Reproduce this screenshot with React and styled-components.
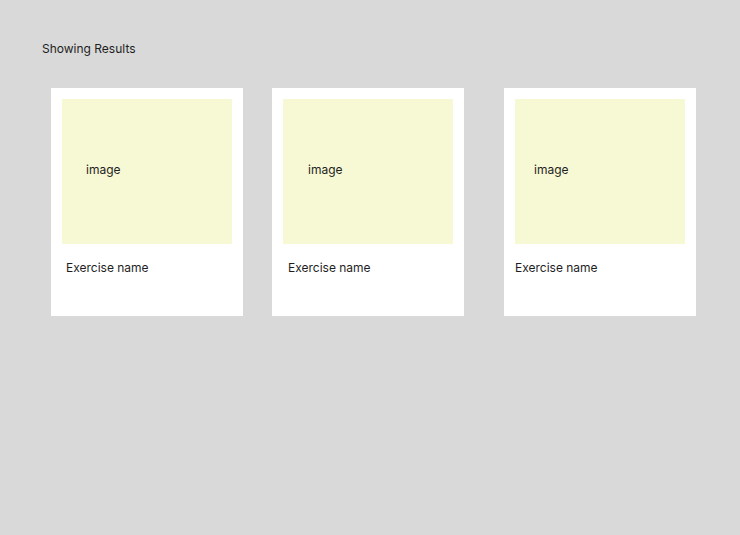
import React from "react";
import styled, { createGlobalStyle } from "styled-components";

const Global = createGlobalStyle`
  html, body {
    margin: 0;
    padding: 0;
    background: #d9d9d9;
  }
  body {
    font-family: Inter, "Noto Sans", "Liberation Sans", sans-serif;
    color: #1e1e1e;
  }
`;

const Page = styled.main`
  min-height: 535px;
  box-sizing: border-box;
  padding: 41px 0 0 42px;
`;

const Title = styled.h1`
  margin: 0;
  font-size: 12px;
  font-weight: 400;
  line-height: 15px;
  color: #1e1e1e;
`;

const Row = styled.section`
  display: flex;
  align-items: flex-start;
  margin-top: 32px;
  padding-left: 9px;
`;

const Card = styled.article`
  width: 192px;
  height: 228px;
  box-sizing: border-box;
  padding: 11px;
  background: #ffffff;
  margin-left: ${(p) => p.$offset}px;
  display: flex;
  flex-direction: column;
`;

const ImageBox = styled.div`
  height: 145px;
  background: #f7f8d4;
  box-sizing: border-box;
  padding: 63px 0 0 ${(p) => p.$inset}px;
  font-size: 12px;
  line-height: 15px;
`;

const Name = styled.div`
  margin-top: 16px;
  padding-left: ${(p) => p.$inset}px;
  font-size: 12px;
  line-height: 15px;
`;

const cards = [
  { offset: 0, imageInset: 24, nameInset: 4 },
  { offset: 29, imageInset: 25, nameInset: 5 },
  { offset: 40, imageInset: 19, nameInset: 0 },
];

export default function App() {
  return (
    <>
      <Global />
      <Page>
        <Title>Showing Results</Title>
        <Row>
          {cards.map((c, i) => (
            <Card key={i} $offset={c.offset}>
              <ImageBox $inset={c.imageInset}>image</ImageBox>
              <Name $inset={c.nameInset}>Exercise name</Name>
            </Card>
          ))}
        </Row>
      </Page>
    </>
  );
}
